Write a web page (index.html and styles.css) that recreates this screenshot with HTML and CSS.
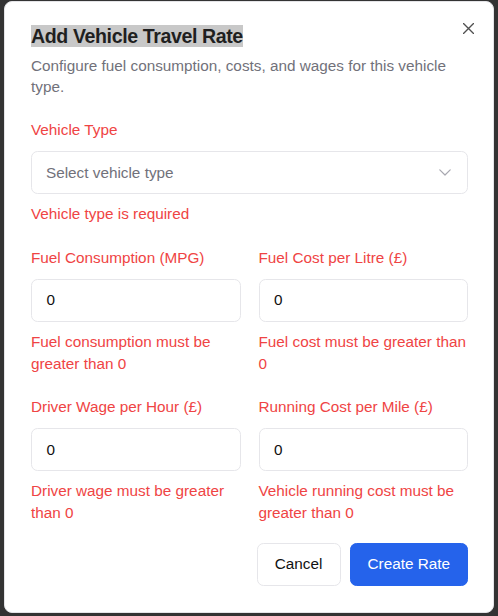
FILE: index.html
```html
<!DOCTYPE html>
<html lang="en">
<head>
<meta charset="utf-8">
<title>Add Vehicle Travel Rate</title>
<link rel="stylesheet" href="styles.css">
</head>
<body>
<div class="dialog">
  <button class="close" aria-label="Close">
    <svg width="11" height="11" viewBox="0 0 11 11"><path d="M0.5 0.5L10.5 10.5M10.5 0.5L0.5 10.5" stroke="#505050" stroke-width="1.4" fill="none" stroke-linecap="round"/></svg>
  </button>
  <h2 class="title"><span class="sel">Add Vehicle Travel Rate</span></h2>
  <p class="desc">Configure fuel consumption, costs, and wages for this vehicle type.</p>

  <div class="field first">
    <label class="label">Vehicle Type</label>
    <div class="select">
      <span class="placeholder">Select vehicle type</span>
      <svg class="chev" width="12" height="7" viewBox="0 0 12 7"><path d="M0.8 0.8L6 6L11.2 0.8" stroke="#a8a8b0" stroke-width="1.2" fill="none" stroke-linecap="round" stroke-linejoin="round"/></svg>
    </div>
    <p class="error">Vehicle type is required</p>
  </div>

  <div class="grid">
    <div class="field">
      <label class="label">Fuel Consumption (MPG)</label>
      <div class="input">0</div>
      <p class="error">Fuel consumption must be greater than 0</p>
    </div>
    <div class="field">
      <label class="label">Fuel Cost per Litre (£)</label>
      <div class="input">0</div>
      <p class="error">Fuel cost must be greater than 0</p>
    </div>
    <div class="field">
      <label class="label">Driver Wage per Hour (£)</label>
      <div class="input">0</div>
      <p class="error">Driver wage must be greater than 0</p>
    </div>
    <div class="field">
      <label class="label">Running Cost per Mile (£)</label>
      <div class="input">0</div>
      <p class="error">Vehicle running cost must be greater than 0</p>
    </div>
  </div>

  <div class="footer">
    <button class="btn btn-outline">Cancel</button>
    <button class="btn btn-primary">Create Rate</button>
  </div>
</div>
</body>
</html>
```

FILE: styles.css
```css
* { box-sizing: border-box; }
html, body { margin: 0; padding: 0; }
body {
  background: #333333;
  width: 498px;
  height: 616px;
  overflow: hidden;
  font-family: "Liberation Sans", Arial, sans-serif;
  padding-top: 1px;
}
.dialog {
  position: relative;
  margin-left: 4px;
  width: 490px;
  background: #ffffff;
  border: 1px solid #e4e4e7;
  border-radius: 8px;
  padding: 24.5px 25px 26px 26px;
}
.close {
  position: absolute;
  top: 20.7px;
  right: 18.7px;
  width: 11px;
  height: 11px;
  padding: 0;
  border: 0;
  background: none;
  display: block;
}
.close svg { display: block; }
.title {
  margin: 0;
  font-size: 19.6px;
  line-height: 19.6px;
  font-weight: 700;
  letter-spacing: -0.4px;
  color: #1f1f1f;
}
.sel { background: #c8c8c8; }
.desc {
  margin: 9px 0 0;
  font-size: 15.3px;
  line-height: 21px;
  color: #71717a;
  padding-right: 10px;
}
.field { display: flex; flex-direction: column; }
.field.first { margin-top: 22px; }
.label {
  font-size: 15.3px;
  line-height: 22px;
  color: #ef4444;
}
.select, .input {
  margin-top: 10px;
  height: 43px;
  border: 1px solid #e6e6ea;
  border-radius: 6.5px;
  background: #fff;
  display: flex;
  align-items: center;
  padding: 0 14px 0 14px;
  font-size: 15.3px;
}
.select { justify-content: space-between; padding-right: 16px; }
.placeholder { color: #71717a; }
.chev { display: block; }
.input { color: #111111; padding-left: 14.5px; }
.error {
  margin: 9px 0 0;
  font-size: 15.3px;
  line-height: 22px;
  color: #ef4444;
}
.grid {
  margin-top: 21.5px;
  display: grid;
  grid-template-columns: 1fr 1fr;
  column-gap: 18px;
  row-gap: 21.5px;
}
.footer {
  margin-top: 18.5px;
  display: flex;
  justify-content: flex-end;
  gap: 9px;
}
.btn {
  height: 43.5px;
  border-radius: 6.5px;
  font-family: "Liberation Sans", Arial, sans-serif;
  font-size: 15.3px;
  padding: 0;
}
.btn-outline {
  width: 84px;
  background: #ffffff;
  border: 1px solid #e6e6ea;
  color: #111111;
}
.btn-primary {
  width: 118.5px;
  background: #2563eb;
  border: 1px solid #2563eb;
  color: #ffffff;
}
```
